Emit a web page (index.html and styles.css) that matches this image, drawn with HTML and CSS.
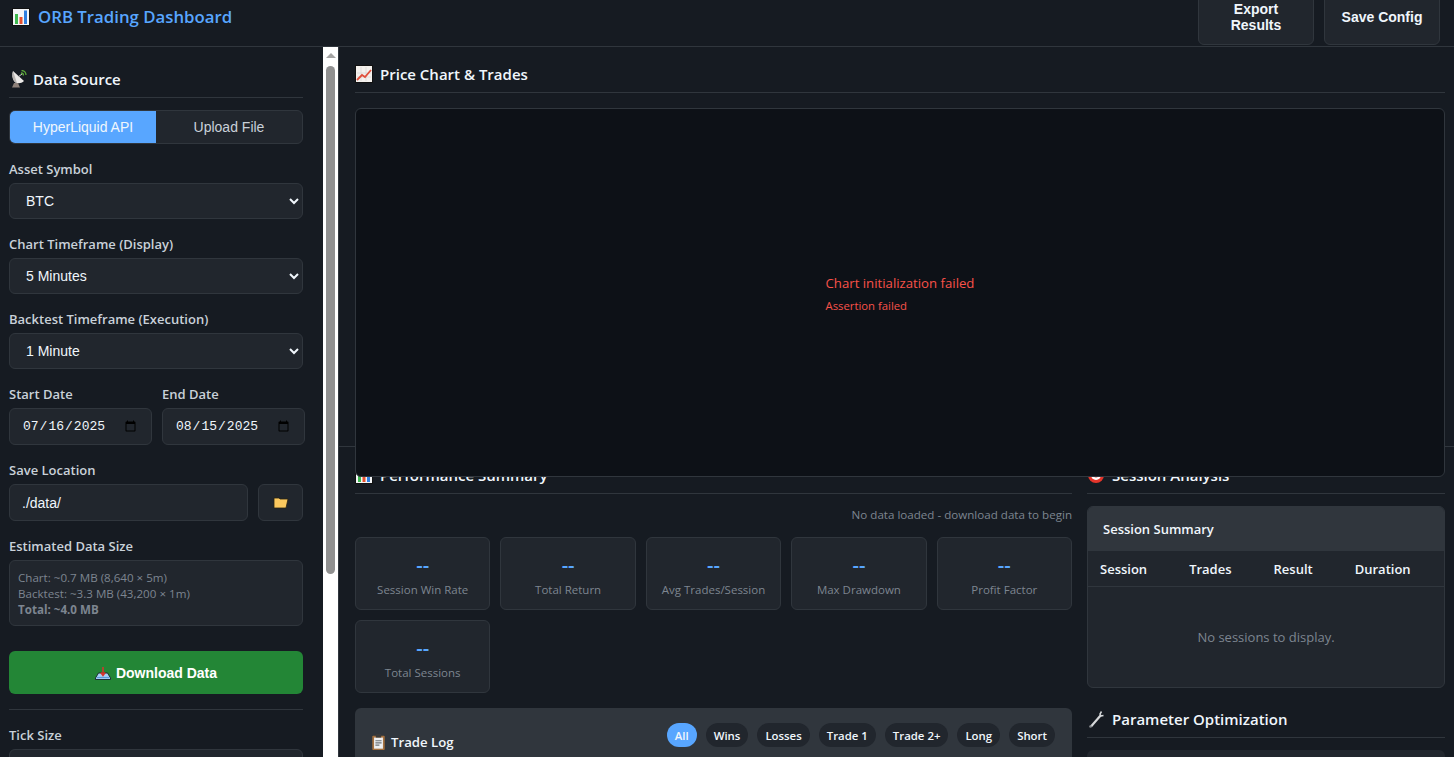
FILE: index.html
```html
<!DOCTYPE html>
<html lang="en">
<head>
  <meta charset="UTF-8">
  <meta name="viewport" content="width=device-width, initial-scale=1.0">
  <title>ORB Trading Dashboard</title>
  <link rel="stylesheet" href="styles.css">
</head>
<body>
  <header class="topbar">
    <h1 class="brand">
      <svg class="icon-bars" viewBox="0 0 18 18"><rect width="18" height="18" fill="#111"/><rect x="1" y="1" width="16" height="16" fill="#f4f6f8"/><rect x="3" y="6" width="3" height="10" fill="#3fb950"/><rect x="7.5" y="9" width="3" height="7" fill="#e5512f"/><rect x="12" y="2.5" width="3" height="13.5" fill="#2f7fe0"/></svg>
      ORB Trading Dashboard
    </h1>
    <div class="top-actions">
      <button class="top-btn">Export Results</button>
      <button class="top-btn">Save Config</button>
    </div>
  </header>

  <div class="layout">
    <aside class="sidebar">
      <div class="side-content">
        <h2 class="section-title title-tight">
          <svg class="icon" viewBox="0 0 18 18"><path d="M4 1l11 10c-3 3-8 3-10 0-2-3-2-7-1-10z" fill="#eceae8"/><path d="M4 1c-1 3-1 7 1 10 1 1 2 2 3 2z" fill="#b9b5b2"/><path d="M9 7l4-3" stroke="#c9c9c9" stroke-width="1"/><path d="M12 3c1.500 0 2.500 1 2.500 2.500M12.500 .5c2.500 0 4.500 2 4.500 4.500" stroke="#5aa63a" stroke-width="1.300" fill="none"/><path d="M3 17.500l2-4.500h4l2 4.500z" fill="#8d8079"/></svg>
          Data Source
        </h2>
        <div class="tabs">
          <button class="tab active">HyperLiquid API</button>
          <button class="tab">Upload File</button>
        </div>

        <label class="field-label">Asset Symbol</label>
        <select class="control"><option>BTC</option></select>

        <label class="field-label">Chart Timeframe (Display)</label>
        <select class="control"><option>5 Minutes</option></select>

        <label class="field-label">Backtest Timeframe (Execution)</label>
        <select class="control"><option>1 Minute</option></select>

        <div class="date-row">
          <div class="date-col">
            <label class="field-label">Start Date</label>
            <input class="control date" type="date" value="2025-07-16">
          </div>
          <div class="date-col">
            <label class="field-label">End Date</label>
            <input class="control date" type="date" value="2025-08-15">
          </div>
        </div>

        <label class="field-label">Save Location</label>
        <div class="save-row">
          <input class="control path" type="text" value="./data/">
          <button class="folder-btn">
            <svg class="icon-folder" viewBox="0 0 16 12"><path d="M1 1h5l1 1h8l-2 9H1z" fill="#fbc85e" stroke="#2a2110" stroke-width=".8"/></svg>
          </button>
        </div>

        <label class="field-label">Estimated Data Size</label>
        <div class="size-box">
          Chart: ~0.7 MB (8,640 × 5m)<br>
          Backtest: ~3.3 MB (43,200 × 1m)<br>
          <strong>Total: ~4.0 MB</strong>
        </div>

        <button class="download-btn">
          <svg class="icon-inbox" viewBox="0 0 16 14"><path d="M.5 12l3-5h9l3 5v1.500H.5z" fill="#a9d0f5" stroke="#16202b" stroke-width=".9"/><path d="M2 11.500h12" stroke="#5a9bdc" stroke-width="1.200"/><path d="M8 1v8M5.800 6.500L8 9.500l2.200-3" stroke="#d8342c" stroke-width="1.500" fill="none"/></svg>
          Download Data
        </button>

        <hr class="divider">

        <label class="field-label">Tick Size</label>
        <input class="control" type="text">
      </div>
      <div class="scrollbar">
        <div class="scroll-up"></div>
        <div class="scroll-thumb"></div>
      </div>
    </aside>

    <main class="main">
      <section class="chart-panel">
        <h2 class="section-title">
          <svg class="icon" viewBox="0 0 18 18"><rect width="18" height="18" fill="#111"/><rect x="1" y="1" width="16" height="16" fill="#f4f1ee"/><path d="M2 8h14M2 12h14M6 2v14M11 2v14" stroke="#d5d0cc" stroke-width=".6"/><path d="M2 15l5-5 3 2 6-7" stroke="#e0503c" stroke-width="1.800" fill="none"/></svg>
          Price Chart &amp; Trades
        </h2>
        <div class="chart-box">
          <div class="chart-error">
            <div class="chart-error-title">Chart initialization failed</div>
            <div class="chart-error-detail">Assertion failed</div>
          </div>
        </div>
      </section>

      <div class="panels">
        <section class="perf">
          <h2 class="section-title">
            <svg class="icon" viewBox="0 0 18 18"><rect width="18" height="18" fill="#111"/><rect x="1" y="1" width="16" height="16" fill="#f4f6f8"/><rect x="3" y="6" width="3" height="10" fill="#3fb950"/><rect x="7.5" y="9" width="3" height="7" fill="#e5512f"/><rect x="12" y="2.5" width="3" height="13.5" fill="#2f7fe0"/></svg>
            Performance Summary
          </h2>
          <p class="status-note">No data loaded - download data to begin</p>
          <div class="metrics">
            <div class="metric"><div class="metric-value">--</div><div class="metric-label">Session Win Rate</div></div>
            <div class="metric"><div class="metric-value">--</div><div class="metric-label">Total Return</div></div>
            <div class="metric"><div class="metric-value">--</div><div class="metric-label">Avg Trades/Session</div></div>
            <div class="metric"><div class="metric-value">--</div><div class="metric-label">Max Drawdown</div></div>
            <div class="metric"><div class="metric-value">--</div><div class="metric-label">Profit Factor</div></div>
            <div class="metric"><div class="metric-value">--</div><div class="metric-label">Total Sessions</div></div>
          </div>
          <div class="trade-log">
            <h3 class="log-title">
              <svg class="icon-clip" viewBox="0 0 14 18"><rect x="0" y="2" width="14" height="16" rx="1" fill="#a5713f"/><rect x="2" y="4" width="10" height="12.5" fill="#eef0f2"/><rect x="4" y="0" width="6" height="4" fill="#3a3a3a"/><path d="M3.500 7.500h7M3.500 10h7M3.500 12.500h4.500" stroke="#6d7378" stroke-width="1.200"/></svg>
              Trade Log
            </h3>
            <div class="filters">
              <button class="chip chip-on">All</button>
              <button class="chip">Wins</button>
              <button class="chip">Losses</button>
              <button class="chip">Trade 1</button>
              <button class="chip">Trade 2+</button>
              <button class="chip">Long</button>
              <button class="chip">Short</button>
            </div>
          </div>
        </section>

        <section class="side-panels">
          <h2 class="section-title">
            <svg class="icon" viewBox="0 0 18 18"><circle cx="9" cy="9" r="8" fill="#e5352b"/><circle cx="9" cy="9" r="5" fill="#fff"/><circle cx="9" cy="9" r="2.5" fill="#e5352b"/></svg>
            Session Analysis
          </h2>
          <div class="session-card">
            <div class="session-head">Session Summary</div>
            <div class="session-cols">
              <span>Session</span><span>Trades</span><span>Result</span><span>Duration</span>
            </div>
            <div class="session-empty">No sessions to display.</div>
          </div>
          <h2 class="section-title opt-title">
            <svg class="icon" viewBox="0 0 18 18"><path d="M4 16.500L14 5" stroke="#d6d8da" stroke-width="2.200"/><path d="M14.500 1.500l-1.500 2.500 1 2 2.500-.5" stroke="#d6d8da" stroke-width="1.500" fill="none"/><circle cx="3.500" cy="16.500" r="1.300" fill="#8a8d90"/></svg>
            Parameter Optimization
          </h2>
          <div class="opt-card"></div>
        </section>
      </div>
    </main>
  </div>
</body>
</html>
```

FILE: styles.css
```css
* {
  box-sizing: border-box;
}
html, body {
  height: 100%;
}
body {
  margin: 0;
  overflow: hidden;
  background: #161b22;
  color: #f0f6fc;
  font-family: "Open Sans", "Noto Sans", sans-serif;
  font-size: 14px;
}
button, select, input {
  font-family: "Liberation Sans", Arial, sans-serif;
}

/* top bar */
.topbar {
  height: 47px;
  display: flex;
  justify-content: space-between;
  align-items: flex-end;
  padding: 0 14px 1px 12px;
  border-bottom: 1px solid #30363d;
  overflow: hidden;
}
.brand {
  align-self: flex-start;
  margin: 5px 0 0;
  display: flex;
  align-items: center;
  gap: 8px;
  color: #58a6ff;
  font-size: 16.8px;
  font-weight: 600;
  line-height: 24px;
}
.icon-bars {
  width: 18px;
  height: 18px;
}
.top-actions {
  display: flex;
  gap: 10px;
}
.top-btn {
  width: 116px;
  height: 60px;
  padding: 6px 16px 3px;
  background: #21262d;
  border: 1px solid #30363d;
  border-radius: 6px;
  color: #f0f6fc;
  font-size: 14px;
  font-weight: 700;
  line-height: 16px;
}

.layout {
  display: flex;
  height: 710px;
}

/* sidebar */
.sidebar {
  width: 339px;
  flex: none;
  display: flex;
  overflow: hidden;
  border-right: 1px solid #30363d;
}
.side-content {
  width: 323px;
  flex: none;
  padding: 20px 20px 0 9px;
}
.scrollbar {
  width: 15px;
  background: #fff;
  display: flex;
  flex-direction: column;
  align-items: center;
}
.scroll-up {
  margin-top: 6px;
  border-left: 5px solid transparent;
  border-right: 5px solid transparent;
  border-bottom: 5px solid #a3a3a3;
}
.scroll-thumb {
  margin-top: 8px;
  width: 9px;
  height: 508px;
  background: #909090;
  border-radius: 5px;
}

.section-title {
  margin: 0;
  padding-bottom: 6px;
  display: flex;
  align-items: center;
  gap: 7px;
  font-size: 15px;
  font-weight: 600;
  line-height: 24px;
  border-bottom: 1px solid #30363d;
}
.title-tight {
  gap: 6px;
}
.icon {
  width: 18px;
  height: 18px;
  flex: none;
}
.tabs {
  display: flex;
  margin-top: 12px;
  height: 34px;
  border: 1px solid #30363d;
  border-radius: 6px;
  background: #21262d;
  overflow: hidden;
}
.tab {
  flex: 1;
  border: none;
  background: none;
  color: #c9d1d9;
  font-size: 14px;
}
.tab.active {
  background: #58a6ff;
  color: #f0f6fc;
}
.field-label {
  display: block;
  margin: 16px 0 5px;
  color: #c9d1d9;
  font-size: 13px;
  font-weight: 600;
  line-height: 18px;
}
.control {
  display: block;
  width: 100%;
  height: 36px;
  padding: 0 12px;
  background: #21262d;
  border: 1px solid #30363d;
  border-radius: 6px;
  color: #f0f6fc;
  font-size: 14px;
  color-scheme: dark;
}
.date-row {
  display: flex;
  gap: 10px;
  width: 296px;
}
.date-col {
  flex: 1;
}
.date {
  height: 37px;
  color-scheme: light;
  font-family: "Liberation Mono", monospace;
  font-size: 13px;
}
.save-row {
  display: flex;
  gap: 10px;
}
.path {
  flex: 1;
  height: 37px;
}
.folder-btn {
  width: 45px;
  height: 37px;
  background: #21262d;
  border: 1px solid #30363d;
  border-radius: 6px;
  display: flex;
  align-items: center;
  justify-content: center;
}
.icon-folder {
  width: 16px;
  height: 12px;
}
.size-box {
  padding: 9px 8px;
  height: 66px;
  background: #21262d;
  border: 1px solid #30363d;
  border-radius: 6px;
  color: #7d8590;
  font-size: 11.6px;
  line-height: 16px;
}
.download-btn {
  width: 100%;
  height: 43px;
  margin-top: 25px;
  display: flex;
  align-items: center;
  justify-content: center;
  gap: 5px;
  background: #238636;
  border: none;
  border-radius: 6px;
  color: #fff;
  font-size: 14px;
  font-weight: 700;
}
.icon-inbox {
  width: 16px;
  height: 14px;
}
.divider {
  margin: 15px 0 0;
  border: none;
  border-top: 1px solid #30363d;
}

/* main area */
.main {
  flex: 1;
  min-width: 0;
  overflow: hidden;
}
.chart-panel {
  height: 400px;
  padding: 15px 9px 0 16px;
  border-bottom: 1px solid #30363d;
}
.chart-box {
  position: relative;
  z-index: 2;
  height: 369px;
  margin-top: 15px;
  padding-top: 2px;
  display: flex;
  align-items: center;
  justify-content: center;
  background: #0d1117;
  border: 1px solid #30363d;
  border-radius: 6px;
}
.chart-error {
  color: #f85149;
}
.chart-error-title {
  font-size: 13.2px;
  line-height: 18px;
}
.chart-error-detail {
  margin-top: 6px;
  font-size: 11.3px;
  line-height: 16px;
}

.panels {
  display: grid;
  grid-template-columns: 717px 358px;
  gap: 15px;
  padding: 16px 9px 0 16px;
}
.status-note {
  margin: 13px 0 14px;
  text-align: right;
  color: #7d8590;
  font-size: 11.6px;
  line-height: 16px;
}
.metrics {
  display: grid;
  grid-template-columns: repeat(5, 1fr);
  gap: 10px;
}
.metric {
  height: 73px;
  padding: 15px 8px 0;
  text-align: center;
  background: #21262d;
  border: 1px solid #30363d;
  border-radius: 6px;
}
.metric-value {
  color: #58a6ff;
  font-size: 20px;
  font-weight: 600;
  line-height: 24px;
}
.metric-label {
  margin-top: 5px;
  color: #7d8590;
  font-size: 11.5px;
  line-height: 16px;
  white-space: nowrap;
}
.trade-log {
  display: flex;
  justify-content: space-between;
  margin-top: 15px;
  height: 60px;
  padding: 15px 17px 0;
  background: #30363d;
  border-radius: 6px 6px 0 0;
}
.log-title {
  margin: 7px 0 0;
  display: flex;
  align-items: center;
  gap: 6px;
  height: 24px;
  font-size: 13.2px;
  font-weight: 600;
}
.icon-clip {
  width: 13px;
  height: 16px;
}
.filters {
  display: flex;
  gap: 9px;
  height: 24px;
}
.chip {
  padding: 0 8px;
  background: #21262d;
  border: none;
  border-radius: 12px;
  color: #f0f6fc;
  font-family: "Open Sans", sans-serif;
  font-size: 11.4px;
  font-weight: 600;
}
.chip-on {
  background: #58a6ff;
}
.session-card {
  margin-top: 12px;
  height: 182px;
  background: #21262d;
  border: 1px solid #30363d;
  border-radius: 6px;
  overflow: hidden;
}
.session-head {
  height: 44px;
  padding: 0 15px;
  display: flex;
  align-items: center;
  background: #30363d;
  font-size: 13px;
  font-weight: 600;
}
.session-cols {
  display: flex;
  height: 36px;
  align-items: center;
  padding: 0 12px;
  gap: 42px;
  border-bottom: 1px solid #30363d;
  font-size: 13px;
  font-weight: 600;
}
.session-empty {
  margin-top: 41px;
  text-align: center;
  color: #7d8590;
  font-size: 13px;
  line-height: 18px;
}
.opt-title {
  margin-top: 19px;
}
.opt-card {
  margin-top: 12px;
  height: 60px;
  background: #21262d;
  border-radius: 6px;
}
```
